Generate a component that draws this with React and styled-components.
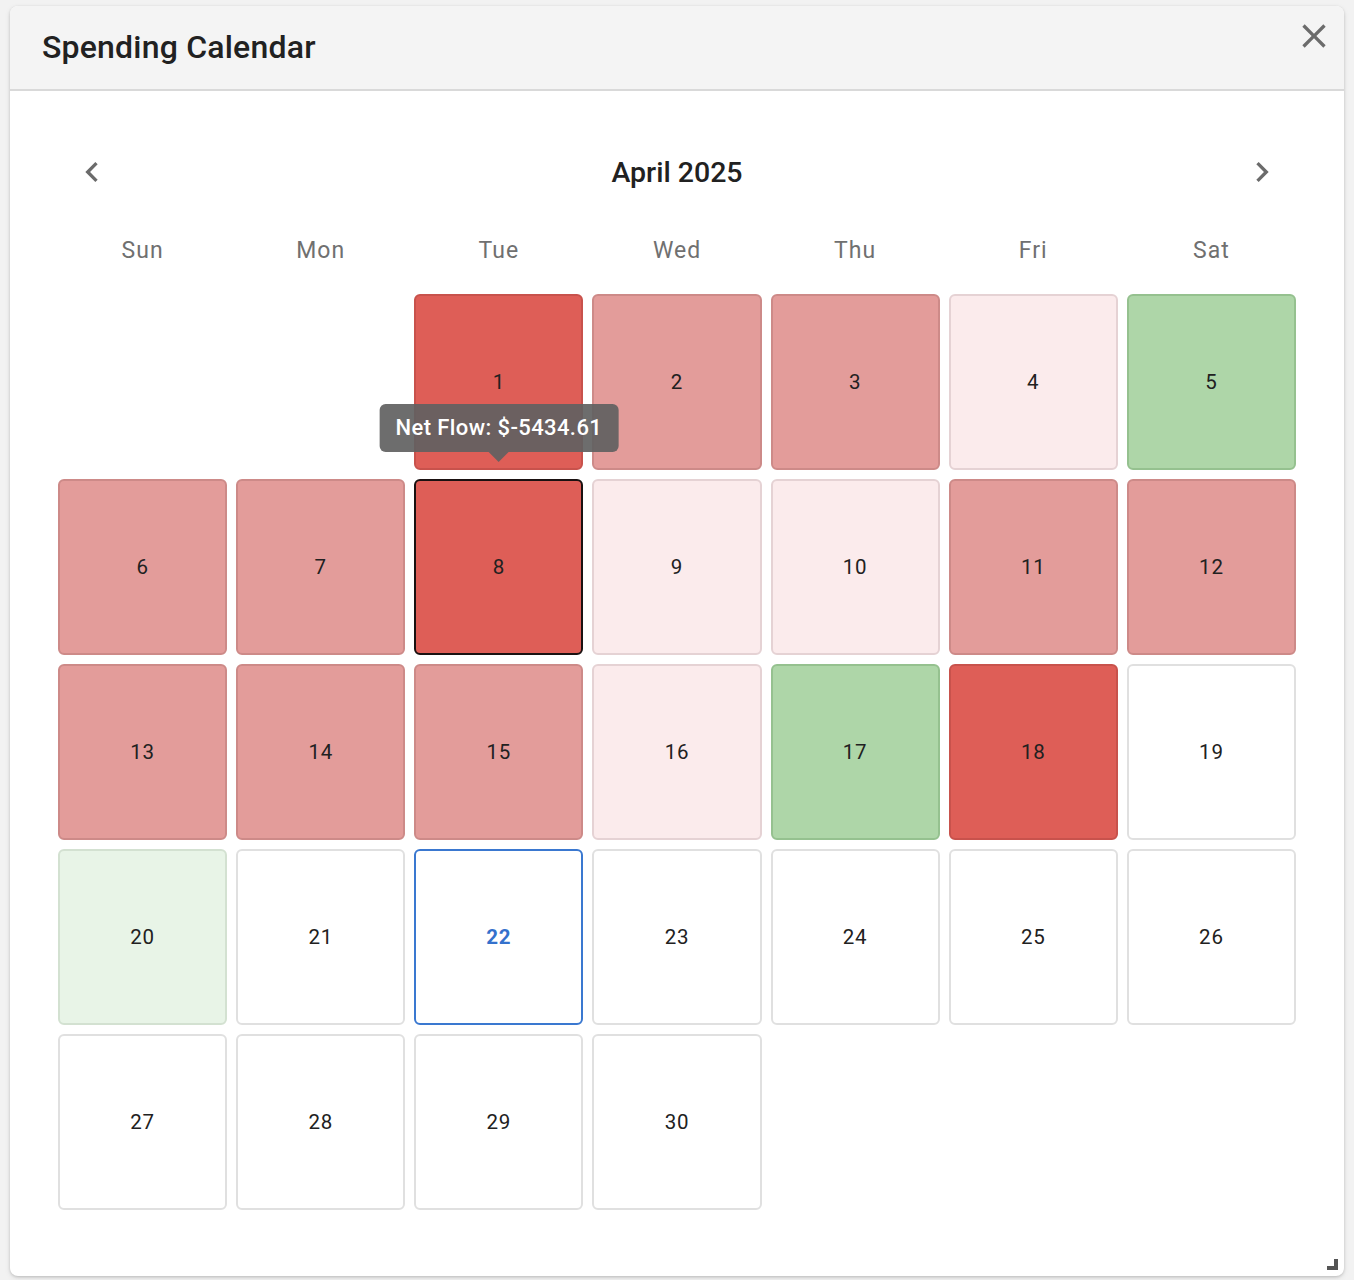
import React from "react";
import styled, { createGlobalStyle } from "styled-components";

const Global = createGlobalStyle`
  html, body { margin: 0; padding: 0; background: #f2f2f2; }
  body { font-family: Roboto, "Noto Sans", "Liberation Sans", sans-serif; }
  * { box-sizing: border-box; }
`;

const Page = styled.div`
  padding: 6px 10px 4px 10px;
`;

const Dialog = styled.div`
  position: relative;
  width: 1334px;
  height: 1270px;
  background: #fff;
  border-radius: 8px;
  box-shadow: 0 1px 3px rgba(0,0,0,0.18), 0 2px 6px rgba(0,0,0,0.08);
  overflow: hidden;
  display: flex;
  flex-direction: column;
`;

const Header = styled.div`
  height: 85px;
  flex: none;
  background: #f4f4f4;
  border-bottom: 2px solid #d9d9d9;
  display: flex;
  align-items: center;
  justify-content: space-between;
  padding: 0 6px 2px 32px;
`;

const Title = styled.h2`
  margin: 0;
  font-size: 32px;
  font-weight: 500;
  color: #212121;
  letter-spacing: 0.2px;
`;

const IconButton = styled.button`
  width: 48px;
  height: 48px;
  border: none;
  background: transparent;
  padding: 0;
  display: flex;
  align-items: center;
  justify-content: center;
  color: #6b6b6b;
  cursor: pointer;
  align-self: ${p => (p.$top ? "flex-start" : "center")};
  margin-top: ${p => (p.$top ? "6px" : "0")};
`;

const Body = styled.div`
  flex: 1;
  padding: 57px 48px 0 48px;
  display: flex;
  flex-direction: column;
`;

const Nav = styled.div`
  height: 48px;
  padding: 0 10px;
  display: flex;
  align-items: center;
  justify-content: space-between;
`;

const Month = styled.div`
  font-size: 28.5px;
  font-weight: 500;
  color: #212121;
`;

const Weekdays = styled.div`
  margin-top: 34px;
  height: 40px;
  display: grid;
  grid-template-columns: repeat(7, 1fr);
  column-gap: 9px;
  align-items: center;
`;

const Weekday = styled.div`
  text-align: center;
  font-size: 23px;
  color: #707070;
  letter-spacing: 1px;
`;

const Grid = styled.div`
  margin-top: 24px;
  display: grid;
  grid-template-columns: repeat(7, 1fr);
  grid-auto-rows: 176px;
  gap: 9px;
`;

const tones = {
  dark: { bg: "#de5e57", border: "#c8524c" },
  med: { bg: "#e39c9a", border: "#cd8a88" },
  light: { bg: "#fbebec", border: "#e5d2d4" },
  green: { bg: "#aed6a8", border: "#95c18f" },
  lgreen: { bg: "#e8f4e7", border: "#d3e1d1" },
  white: { bg: "#ffffff", border: "#e0e0e0" },
};

const Cell = styled.div`
  position: relative;
  border-radius: 6px;
  background: ${p => tones[p.$tone].bg};
  border: 2px solid
    ${p => (p.$hover ? "#1a1111" : p.$today ? "#3a78d0" : tones[p.$tone].border)};
  display: flex;
  align-items: center;
  justify-content: center;
  font-size: 20.5px;
  color: ${p => (p.$today ? "#3471cc" : "#212121")};
  font-weight: ${p => (p.$today ? 700 : 400)};
  letter-spacing: 0.8px;
`;

const Blank = styled.div``;

const Tooltip = styled.div`
  position: absolute;
  left: 50%;
  bottom: calc(100% + 29px);
  transform: translateX(-50%);
  background: rgba(97, 97, 97, 0.92);
  color: #fff;
  font-size: 22px;
  font-weight: 500;
  letter-spacing: 0.4px;
  white-space: nowrap;
  padding: 0 16px;
  height: 48px;
  line-height: 48px;
  border-radius: 6px;
  z-index: 5;
  &::after {
    content: "";
    position: absolute;
    left: 50%;
    top: 100%;
    transform: translateX(-50%);
    border-left: 10px solid transparent;
    border-right: 10px solid transparent;
    border-top: 10px solid rgba(97, 97, 97, 0.92);
  }
`;

const Resize = styled.div`
  position: absolute;
  right: 6px;
  bottom: 6px;
  width: 11px;
  height: 11px;
  &::before {
    content: "";
    position: absolute;
    right: 0;
    bottom: 0;
    width: 4px;
    height: 11px;
    background: #555;
  }
  &::after {
    content: "";
    position: absolute;
    right: 0;
    bottom: 0;
    width: 11px;
    height: 4px;
    background: #555;
  }
`;

const Chevron = ({ dir }) => (
  <svg width="40" height="40" viewBox="0 0 24 24" fill="currentColor">
    {dir === "left" ? (
      <path d="M15.41 7.41 14 6l-6 6 6 6 1.41-1.41L10.83 12z" />
    ) : (
      <path d="M10 6 8.59 7.41 13.17 12l-4.58 4.59L10 18l6-6z" />
    )}
  </svg>
);

const CloseIcon = () => (
  <svg width="40" height="40" viewBox="0 0 24 24" fill="currentColor">
    <path d="M19 6.41 17.59 5 12 10.59 6.41 5 5 6.41 10.59 12 5 17.59 6.41 19 12 13.41 17.59 19 19 17.59 13.41 12z" />
  </svg>
);

const days = [
  null, null,
  [1, "dark"], [2, "med"], [3, "med"], [4, "light"], [5, "green"],
  [6, "med"], [7, "med"], [8, "dark"], [9, "light"], [10, "light"], [11, "med"], [12, "med"],
  [13, "med"], [14, "med"], [15, "med"], [16, "light"], [17, "green"], [18, "dark"], [19, "white"],
  [20, "lgreen"], [21, "white"], [22, "white"], [23, "white"], [24, "white"], [25, "white"], [26, "white"],
  [27, "white"], [28, "white"], [29, "white"], [30, "white"],
];

export default function App() {
  return (
    <>
      <Global />
      <Page>
        <Dialog>
          <Header>
            <Title>Spending Calendar</Title>
            <IconButton $top aria-label="close">
              <CloseIcon />
            </IconButton>
          </Header>
          <Body>
            <Nav>
              <IconButton aria-label="previous month">
                <Chevron dir="left" />
              </IconButton>
              <Month>April 2025</Month>
              <IconButton aria-label="next month">
                <Chevron dir="right" />
              </IconButton>
            </Nav>
            <Weekdays>
              {["Sun", "Mon", "Tue", "Wed", "Thu", "Fri", "Sat"].map(d => (
                <Weekday key={d}>{d}</Weekday>
              ))}
            </Weekdays>
            <Grid>
              {days.map((d, i) =>
                d ? (
                  <Cell key={i} $tone={d[1]} $hover={d[0] === 8} $today={d[0] === 22}>
                    {d[0]}
                    {d[0] === 8 && <Tooltip>Net Flow: $-5434.61</Tooltip>}
                  </Cell>
                ) : (
                  <Blank key={i} />
                )
              )}
            </Grid>
          </Body>
          <Resize />
        </Dialog>
      </Page>
    </>
  );
}
